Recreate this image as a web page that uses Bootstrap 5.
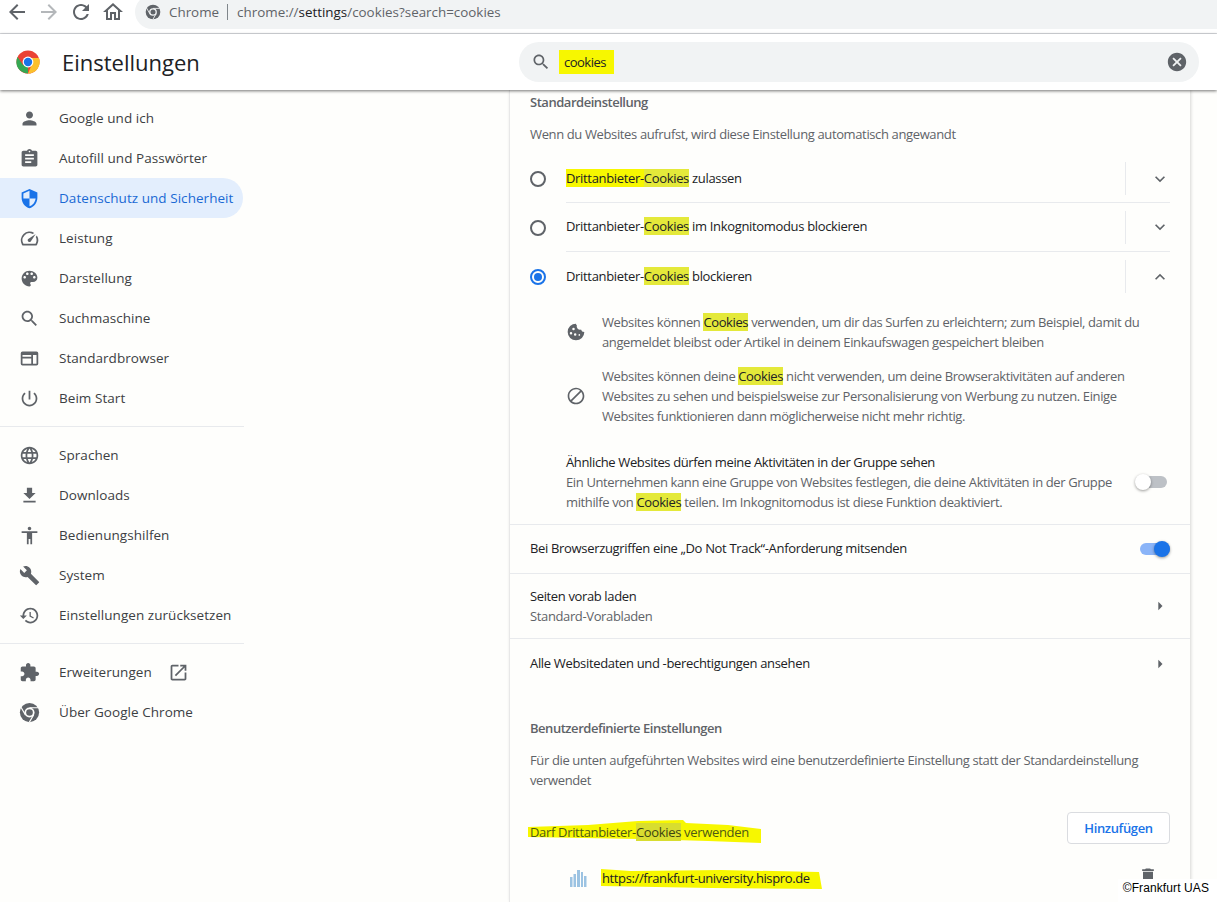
<!DOCTYPE html>
<html lang="de"><head><meta charset="utf-8"><title>Einstellungen</title>
<link rel="stylesheet" href="https://cdn.jsdelivr.net/npm/bootstrap@5.3.0/dist/css/bootstrap.min.css">
<style>
html,body{height:902px;overflow:hidden;background:#fefefc}
body{font-family:"Open Sans","Noto Sans",sans-serif;font-size:13px;color:#3c4043;letter-spacing:-.2px;line-height:1.5}
svg{fill:currentColor;flex:none;display:block}
.toolbar{height:34px;background:#fff;border-bottom:1px solid #dadce0;color:#5f6368;overflow:hidden}
.toolbar .back{margin-left:5px}
.toolbar .nav-ic{width:24px;height:24px}
.addr{height:34px;margin-top:-5px;margin-left:10px;background:#f1f3f4;border-radius:17px 0 0 17px;padding:0 0 0 10px;font-size:13.4px;letter-spacing:0;color:#5f6368}
.addr b{font-weight:400;color:#202124}
.addr-sep{width:1px;height:16px;background:#80868b;margin:0 9px 0 8px}
.hdr{height:56px;background:#fff;box-shadow:0 1px 3px rgba(0,0,0,.55);position:relative;z-index:2}
.hdr-title{font-size:22px;font-weight:500;letter-spacing:0;color:#202124;width:519px;padding-left:16px}
.logo-g{margin-right:22px}
.sbox{height:40px;width:680px;background:#f1f3f4;border-radius:20px;color:#5f6368;padding:0 11px 0 12px}
.sbox span{color:#202124;letter-spacing:-.5px}
.hl-hand{background:#f7f700;padding:3px 8px 1px 5px}
.side{width:244px;padding-top:8px;flex:none}
.s-item{height:40px;width:243px;border-radius:0 20px 20px 0;padding:0 0 0 19px;color:#3c4043;font-size:13.5px;letter-spacing:.05px;white-space:nowrap}
.s-item svg{width:21px;height:21px;color:#5f6368;margin:0 19px 0 0}
.s-item.on{background:#e3eefd;color:#1a69d4}
.s-item.on svg{color:#1a73e8}
.s-rule{height:1px;background:#e8eaed;margin:8px 0}
.panel{width:681px;margin-left:265px;border-left:1px solid #e8e8e8;box-shadow:1px 0 3px rgba(0,0,0,.16);height:812px;overflow:hidden;position:relative;letter-spacing:-.33px}
.h-sec{font-weight:600;color:#5f6368;padding-left:20px;letter-spacing:-.47px;line-height:20px}
.m{color:#5f6368;line-height:20px;letter-spacing:-.37px}
.cy{background:#e4e93a;color:#202124}
.hy{background:#f7f700}
.radio-row{padding:0 20px;color:#202124}
.radio-ring{width:16px;height:16px;border:2px solid #5f6368;border-radius:50%;margin-right:20px;flex:none}
.radio-ring.sel{border-color:#1a73e8;position:relative}
.radio-ring.sel::after{content:"";position:absolute;inset:2px;background:#1a73e8;border-radius:50%}
.rule-b{border-bottom:1px solid #e8eaed}
.v-sep{width:1px;height:33px;background:#e8eaed;margin:0 24px 0 auto}
.chev{width:20px;height:20px;color:#5f6368}
.sub{padding-left:56px;padding-right:20px;letter-spacing:-.38px}
.sub svg{width:20px;height:20px;color:#5f6368;margin-right:16px}
.tog{width:30px;height:12px;border-radius:6px;background:#bdc1c6;position:relative;flex:none}
.tog i{position:absolute;width:16px;height:16px;top:-2px;left:-2px;background:#fff;border-radius:50%;box-shadow:0 1px 3px rgba(0,0,0,.4)}
.tog.on{background:#8ab4f8}
.tog.on i{background:#1a73e8;left:14px}
.line-row{padding:0 20px;color:#202124}
.add-btn{width:103px;height:32px;border:1px solid #dadce0;border-radius:4px;background:#fff;color:#1a73e8;font-weight:600;font-size:13px;padding:1px 0 0;letter-spacing:-.35px}
.caret{width:20px;height:20px;color:#5f6368}
.wm{position:absolute;right:0;bottom:0;background:#fff;color:#000;padding:2px 8px 6px 5px;font-family:"Liberation Sans",sans-serif;font-size:12px;letter-spacing:.1px;z-index:3;line-height:15px}
.hand{position:relative;display:inline-block;z-index:0}
.hand svg{position:absolute;z-index:-1;fill:#f7f700}
.url-txt{letter-spacing:-.38px}
</style></head>
<body>
<div class="toolbar d-flex align-items-start">
<svg class="nav-ic back" viewBox="0 0 24 24"><path d="M20 11H7.830l5.590-5.590L12 4l-8 8 8 8 1.410-1.410L7.830 13H20v-2z"/></svg>
<svg class="nav-ic ms-2" style="color:#b4b7ba" viewBox="0 0 24 24"><path d="M12 4l-1.410 1.410L16.170 11H4v2h12.170l-5.580 5.590L12 20l8-8z"/></svg>
<svg class="nav-ic ms-2" viewBox="0 0 24 24"><path d="M17.650 6.350C16.200 4.900 14.210 4 12 4c-4.420 0-7.990 3.580-7.990 8s3.570 8 7.990 8c3.730 0 6.840-2.550 7.730-6h-2.080c-.82 2.330-3.040 4-5.650 4-3.310 0-6-2.690-6-6s2.690-6 6-6c1.660 0 3.140.69 4.220 1.780L13 11h7V4l-2.350 2.350z"/></svg>
<svg class="nav-ic ms-2" viewBox="0 0 24 24"><path d="M12 5.690l5 4.500V18h-2v-6H9v6H7v-7.810l5-4.500M12 3L2 12h3v8h6v-6h2v6h6v-8h3L12 3z"/></svg>
<div class="addr flex-grow-1 d-flex align-items-center">
<svg width="16" height="16" viewBox="0 0 24 24"><circle cx="12" cy="12" r="11"/><circle cx="12" cy="12" r="5.800" fill="#f1f3f4"/><circle cx="12" cy="12" r="3.800"/><path d="M12 6.600H22M7.300 14.700L2.300 6M16.700 14.700L11.700 23.300" stroke="#f1f3f4" stroke-width="1.300" fill="none"/></svg>
<span class="ms-2">Chrome</span><span class="addr-sep"></span><span>chrome://<b>settings</b>/cookies?search=cookies</span>
</div></div>

<div class="hdr d-flex align-items-center">
<div class="hdr-title d-flex align-items-center">
<svg class="logo-g" width="24" height="24" viewBox="0 0 24 24"><circle cx="12" cy="12" r="11.500" fill="#ea4335"/><path d="M12 23.500A11.500 11.500 0 0 1 1.500 7L7 15l5 1z" fill="#34a853"/><path d="M12 23.500A11.500 11.500 0 0 0 23 8h-8l1 6z" fill="#fbc02d"/><circle cx="12" cy="12" r="5.400" fill="#fff"/><circle cx="12" cy="12" r="4.200" fill="#1a73e8"/></svg>
Einstellungen</div>
<div class="sbox d-flex align-items-center"><svg width="20" height="20" viewBox="0 0 24 24"><path d="M15.500 14h-.79l-.28-.27C15.410 12.590 16 11.110 16 9.500 16 5.910 13.090 3 9.500 3S3 5.910 3 9.500 5.910 16 9.500 16c1.610 0 3.090-.59 4.230-1.570l.27.28v.79l5 4.990L20.490 19l-4.990-5zm-6 0C7.010 14 5 11.990 5 9.500S7.010 5 9.500 5 14 7.010 14 9.500 11.990 14 9.500 14z"/></svg>
<span class="hl-hand ms-2">cookies</span>
<svg class="ms-auto" width="22" height="22" viewBox="0 0 24 24"><path d="M12 2C6.470 2 2 6.470 2 12s4.470 10 10 10 10-4.470 10-10S17.530 2 12 2zm5 13.590L15.590 17 12 13.410 8.410 17 7 15.590 10.590 12 7 8.410 8.410 7 12 10.590 15.590 7 17 8.410 13.410 12 17 15.590z"/></svg></div>
</div>

<div class="d-flex">
<nav class="side">
<div class="s-item d-flex align-items-center"><svg viewBox="0 0 24 24"><path d="M12 12c2.210 0 4-1.790 4-4s-1.790-4-4-4-4 1.790-4 4 1.790 4 4 4zm0 2c-2.670 0-8 1.340-8 4v2h16v-2c0-2.660-5.330-4-8-4z"/></svg>Google und ich</div>
<div class="s-item d-flex align-items-center"><svg viewBox="0 0 24 24"><path d="M19 3h-4.180C14.400 1.840 13.300 1 12 1c-1.300 0-2.400.84-2.820 2H5c-1.100 0-2 .9-2 2v14c0 1.100.9 2 2 2h14c1.100 0 2-.9 2-2V5c0-1.100-.9-2-2-2zm-7 0c.55 0 1 .45 1 1s-.45 1-1 1-1-.45-1-1 .45-1 1-1zm2 14H7v-2h7v2zm3-4H7v-2h10v2zm0-4H7V7h10v2z"/></svg>Autofill und Passwörter</div>
<div class="s-item on d-flex align-items-center"><svg viewBox="0 0 24 24"><path d="M12 1L3 5v6c0 5.550 3.840 10.740 9 12 5.160-1.260 9-6.450 9-12V5l-9-4zm0 10.990h7c-.53 4.120-3.280 7.790-7 8.940V12H5V6.300l7-3.110v8.800z"/></svg>Datenschutz und Sicherheit</div>
<div class="s-item d-flex align-items-center"><svg viewBox="0 0 24 24"><path d="M20.380 8.570l-1.230 1.850a8 8 0 0 1-.22 7.580H5.070A8 8 0 0 1 15.580 6.850l1.850-1.230A10 10 0 0 0 3.350 19a2 2 0 0 0 1.720 1h13.850a2 2 0 0 0 1.740-1 10 10 0 0 0-.27-10.440zm-9.790 6.840a2 2 0 0 0 2.830 0l5.660-8.490-8.490 5.660a2 2 0 0 0 0 2.830z"/></svg>Leistung</div>
<div class="s-item d-flex align-items-center"><svg viewBox="0 0 24 24"><path d="M12 3c-4.970 0-9 4.030-9 9s4.030 9 9 9c.83 0 1.500-.67 1.500-1.500 0-.39-.15-.74-.39-1.010-.23-.26-.38-.61-.38-.99 0-.83.67-1.500 1.500-1.500H16c2.760 0 5-2.240 5-5 0-4.420-4.030-8-9-8zm-5.500 9c-.83 0-1.500-.67-1.500-1.500S5.670 9 6.500 9 8 9.670 8 10.500 7.330 12 6.500 12zm3-4C8.670 8 8 7.330 8 6.500S8.670 5 9.500 5s1.500.67 1.500 1.500S10.330 8 9.500 8zm5 0c-.83 0-1.500-.67-1.500-1.500S13.670 5 14.500 5s1.500.67 1.500 1.500S15.330 8 14.500 8zm3 4c-.83 0-1.500-.67-1.500-1.500S16.670 9 17.500 9s1.500.67 1.500 1.500-.67 1.500-1.500 1.500z"/></svg>Darstellung</div>
<div class="s-item d-flex align-items-center"><svg viewBox="0 0 24 24"><path d="M15.500 14h-.79l-.28-.27C15.410 12.590 16 11.110 16 9.500 16 5.910 13.090 3 9.500 3S3 5.910 3 9.500 5.910 16 9.500 16c1.610 0 3.090-.59 4.230-1.570l.27.28v.79l5 4.990L20.490 19l-4.990-5zm-6 0C7.010 14 5 11.990 5 9.500S7.010 5 9.500 5 14 7.010 14 9.500 11.990 14 9.500 14z"/></svg>Suchmaschine</div>
<div class="s-item d-flex align-items-center"><svg viewBox="0 0 24 24"><path fill-rule="evenodd" d="M4 4h16a2 2 0 0 1 2 2v12a2 2 0 0 1-2 2H4a2 2 0 0 1-2-2V6a2 2 0 0 1 2-2zm0 8v6h10v-6H4zm12-4v10h4V8h-4zM4 8v2h10V8H4z"/></svg>Standardbrowser</div>
<div class="s-item d-flex align-items-center"><svg viewBox="0 0 24 24"><path d="M13 3h-2v10h2V3zm4.830 2.170l-1.420 1.420C17.990 7.860 19 9.810 19 12c0 3.870-3.130 7-7 7s-7-3.130-7-7c0-2.190 1.010-4.140 2.580-5.420L6.170 5.170C4.230 6.820 3 9.260 3 12c0 4.970 4.030 9 9 9s9-4.030 9-9c0-2.740-1.230-5.180-3.170-6.830z"/></svg>Beim Start</div>
<div class="s-rule"></div>
<div class="s-item d-flex align-items-center"><svg viewBox="0 0 24 24"><path d="M11.990 2C6.470 2 2 6.480 2 12s4.470 10 9.990 10C17.520 22 22 17.520 22 12S17.520 2 11.990 2zm6.930 6h-2.950c-.32-1.250-.78-2.450-1.380-3.560 1.840.63 3.370 1.910 4.330 3.560zM12 4.040c.83 1.200 1.480 2.530 1.910 3.960h-3.820c.43-1.430 1.080-2.760 1.910-3.960zM4.260 14C4.100 13.360 4 12.690 4 12s.1-1.360.26-2h3.380c-.08.66-.14 1.320-.14 2 0 .68.06 1.340.14 2H4.260zm.82 2h2.950c.32 1.250.78 2.450 1.380 3.560-1.840-.63-3.370-1.900-4.330-3.560zm2.950-8H5.080c.96-1.660 2.490-2.930 4.330-3.560C8.810 5.550 8.350 6.750 8.030 8zM12 19.960c-.83-1.200-1.480-2.530-1.910-3.960h3.820c-.43 1.430-1.080 2.760-1.910 3.960zM14.340 14H9.660c-.09-.66-.16-1.320-.16-2 0-.68.07-1.350.16-2h4.680c.09.65.16 1.320.16 2 0 .68-.07 1.340-.16 2zm.25 5.560c.6-1.110 1.060-2.310 1.380-3.560h2.950c-.96 1.650-2.490 2.930-4.330 3.560zM16.360 14c.08-.66.14-1.320.14-2 0-.68-.06-1.340-.14-2h3.380c.16.64.26 1.310.26 2s-.1 1.360-.26 2h-3.380z"/></svg>Sprachen</div>
<div class="s-item d-flex align-items-center"><svg viewBox="0 0 24 24"><path d="M19 9h-4V3H9v6H5l7 7 7-7zM5 18v2h14v-2H5z"/></svg>Downloads</div>
<div class="s-item d-flex align-items-center"><svg viewBox="0 0 24 24"><path d="M12 2c1.100 0 2 .9 2 2s-.9 2-2 2-2-.9-2-2 .9-2 2-2zm9 7h-6v13h-2v-6h-2v6H9V9H3V7h18v2z"/></svg>Bedienungshilfen</div>
<div class="s-item d-flex align-items-center"><svg viewBox="0 0 24 24"><path d="M22.700 19l-9.100-9.100c.9-2.300.4-5-1.500-6.900-2-2-5-2.400-7.400-1.300L9 6 6 9 1.600 4.700C.4 7.100.9 10.100 2.900 12.100c1.900 1.900 4.600 2.400 6.900 1.500l9.100 9.100c.4.4 1 .4 1.400 0l2.300-2.300c.5-.4.5-1.100.1-1.400z"/></svg>System</div>
<div class="s-item d-flex align-items-center"><svg viewBox="0 0 24 24"><path d="M13 3c-4.970 0-9 4.030-9 9H1l3.890 3.890.07.14L9 12H6c0-3.870 3.130-7 7-7s7 3.130 7 7-3.130 7-7 7c-1.930 0-3.680-.79-4.940-2.060l-1.420 1.420C8.270 19.990 10.510 21 13 21c4.970 0 9-4.030 9-9s-4.030-9-9-9zm-1 5v5l4.280 2.540.72-1.210-3.500-2.080V8H12z"/></svg>Einstellungen zurücksetzen</div>
<div class="s-rule"></div>
<div class="s-item d-flex align-items-center"><svg viewBox="0 0 24 24"><path d="M20.500 11H19V7c0-1.100-.9-2-2-2h-4V3.500C13 2.120 11.880 1 10.500 1S8 2.120 8 3.500V5H4c-1.100 0-1.990.9-1.990 2v3.800H3.500c1.490 0 2.700 1.210 2.700 2.700s-1.210 2.700-2.700 2.700H2V20c0 1.100.9 2 2 2h3.800v-1.500c0-1.490 1.210-2.700 2.700-2.700 1.490 0 2.700 1.210 2.700 2.700V22H17c1.100 0 2-.9 2-2v-4h1.500c1.380 0 2.500-1.120 2.500-2.500S21.880 11 20.500 11z"/></svg>Erweiterungen<svg class="ms-3" viewBox="0 0 24 24"><path d="M19 19H5V5h7V3H5c-1.110 0-2 .9-2 2v14c0 1.100.89 2 2 2h14c1.100 0 2-.9 2-2v-7h-2v7zM14 3v2h3.590l-9.830 9.830 1.410 1.410L19 6.410V10h2V3h-7z"/></svg></div>
<div class="s-item d-flex align-items-center"><svg viewBox="0 0 24 24"><circle cx="12" cy="12" r="11"/><circle cx="12" cy="12" r="5.800" fill="#fefefc"/><circle cx="12" cy="12" r="3.800"/><path d="M12 6.600H22M7.300 14.700L2.300 6M16.700 14.700L11.700 23.300" stroke="#fefefc" stroke-width="1.300" fill="none"/></svg>Über Google Chrome</div>
</nav>

<main class="panel">
<div class="h-sec" style="padding-top:2px">Standardeinstellung</div>
<div class="m" style="padding:12px 20px 0;height:43px">Wenn du Websites aufrufst, wird diese Einstellung automatisch angewandt</div>

<div class="radio-row d-flex align-items-center" style="height:48px"><span class="radio-ring"></span><div class="rule-b d-flex align-items-center flex-grow-1 h-100"><span><span class="hy">Drittanbieter-</span><span class="cy">Cookies</span> zulassen</span><span class="v-sep"></span><svg class="chev" viewBox="0 0 24 24"><path d="M16.590 8.590L12 13.170 7.410 8.590 6 10l6 6 6-6z"/></svg></div></div>
<div class="radio-row d-flex align-items-center" style="height:49px"><span class="radio-ring"></span><div class="rule-b d-flex align-items-center flex-grow-1 h-100"><span>Drittanbieter-<span class="cy">Cookies</span> im Inkognitomodus blockieren</span><span class="v-sep"></span><svg class="chev" viewBox="0 0 24 24"><path d="M16.590 8.590L12 13.170 7.410 8.590 6 10l6 6 6-6z"/></svg></div></div>
<div class="radio-row d-flex align-items-center" style="height:49px"><span class="radio-ring sel"></span><div class="d-flex align-items-center flex-grow-1 h-100"><span>Drittanbieter-<span class="cy">Cookies</span> blockieren</span><span class="v-sep"></span><svg class="chev" viewBox="0 0 24 24"><path d="M12 8l-6 6 1.410 1.410L12 10.830l4.590 4.580L18 14z"/></svg></div></div>

<div class="sub d-flex align-items-center m" style="margin-top:11px"><svg viewBox="0 0 24 24"><path fill-rule="evenodd" d="M12 2a10 10 0 1 0 10 10 4 4 0 0 1-4-3 4 4 0 0 1-5-5 3 3 0 0 1-1-2zM9 7a1.500 1.500 0 1 1 0 3 1.500 1.500 0 0 1 0-3zm-3 5a1.500 1.500 0 1 1 0 3 1.500 1.500 0 0 1 0-3zm5 1.500a1.500 1.500 0 1 1 0 3 1.500 1.500 0 0 1 0-3zm5 1a1 1 0 1 1 0 2 1 1 0 0 1 0-2z"/></svg><div>Websites können <span class="cy">Cookies</span> verwenden, um dir das Surfen zu erleichtern; zum Beispiel, damit du angemeldet bleibst oder Artikel in deinem Einkaufswagen gespeichert bleiben</div></div>
<div class="sub d-flex align-items-center m" style="margin-top:14px"><svg viewBox="0 0 24 24"><path d="M12 2C6.480 2 2 6.480 2 12s4.480 10 10 10 10-4.480 10-10S17.520 2 12 2zM4 12c0-4.420 3.580-8 8-8 1.850 0 3.550.63 4.900 1.690L5.690 16.900C4.630 15.550 4 13.850 4 12zm8 8c-1.850 0-3.550-.63-4.900-1.690L18.310 7.100C19.370 8.450 20 10.150 20 12c0 4.420-3.580 8-8 8z"/></svg><div>Websites können deine <span class="cy">Cookies</span> nicht verwenden, um deine Browseraktivitäten auf anderen Websites zu sehen und beispielsweise zur Personalisierung von Werbung zu nutzen. Einige Websites funktionieren dann möglicherweise nicht mehr richtig.</div></div>

<div class="sub d-flex align-items-center rule-b justify-content-between" style="padding:26px 23px 12px 56px"><div class="m" style="width:556px"><div style="color:#202124">Ähnliche Websites dürfen meine Aktivitäten in der Gruppe sehen</div>Ein Unternehmen kann eine Gruppe von Websites festlegen, die deine Aktivitäten in der Gruppe mithilfe von <span class="cy">Cookies</span> teilen. Im Inkognitomodus ist diese Funktion deaktiviert.</div><div class="tog"><i></i></div></div>

<div class="line-row rule-b d-flex align-items-center justify-content-between" style="height:49px"><span>Bei Browserzugriffen eine „Do Not Track“-Anforderung mitsenden</span><div class="tog on"><i></i></div></div>
<div class="line-row rule-b d-flex align-items-center justify-content-between" style="height:65px"><div class="m"><div style="color:#202124">Seiten vorab laden</div>Standard-Vorabladen</div><svg class="caret" viewBox="0 0 24 24"><path d="M10 7l5 5-5 5z"/></svg></div>
<div class="line-row d-flex align-items-center justify-content-between" style="height:49px"><span>Alle Websitedaten und -berechtigungen ansehen</span><svg class="caret" viewBox="0 0 24 24"><path d="M10 7l5 5-5 5z"/></svg></div>

<div class="h-sec" style="padding-top:30px">Benutzerdefinierte Einstellungen</div>
<div class="m" style="padding:12px 20px 0">Für die unten aufgeführten Websites wird eine benutzerdefinierte Einstellung statt der Standardeinstellung verwendet</div>

<div class="line-row d-flex align-items-center justify-content-between" style="height:32px;margin-top:22px"><span class="hand" style="margin-top:8px;color:#4d5a14;line-height:20px"><svg width="234" height="25" viewBox="0 0 234 25" style="left:-2px;top:-3px"><path d="M0 8L60 6 110 2 155 1 158 4 200 6 233 10V24L180 22 110 20 0 18z"/></svg>Darf Drittanbieter-<span class="cy" style="background:#d8dd30;color:#3c4310">Cookies</span> verwenden</span><button class="btn add-btn">Hinzufügen</button></div>

<div class="d-flex align-items-center" style="height:36px;margin-top:16px;padding-left:60px;padding-right:32px;color:#202124"><svg width="17" height="17" viewBox="0 0 17 17" style="color:#9cc3e2;margin-right:15px"><path d="M0 7h2.500v10H0zM3.500 4H6v13H3.500zM7 0h3v17H7zM11 2h2v15h-2zM14 6h2.500v11H14z"/></svg><span class="hand url-txt" style="line-height:20px"><svg width="222" height="22" viewBox="0 0 222 22" style="left:-1px;top:0"><path d="M0 1L30 3 120 2 218 4 221 21 110 20 0 18z"/></svg>https://frankfurt-university.hispro.de</span><svg class="ms-auto" width="20" height="20" viewBox="0 0 24 24" style="color:#5f6368;margin-top:-4px"><path d="M6 19c0 1.100.9 2 2 2h8c1.100 0 2-.9 2-2V7H6v12zM19 4h-3.500l-1-1h-5l-1 1H5v2h14V4z"/></svg></div>
</main>
</div>
<div class="wm">©Frankfurt UAS</div>
<script src="https://cdn.jsdelivr.net/npm/bootstrap@5.3.0/dist/js/bootstrap.bundle.min.js"></script>
</body></html>
